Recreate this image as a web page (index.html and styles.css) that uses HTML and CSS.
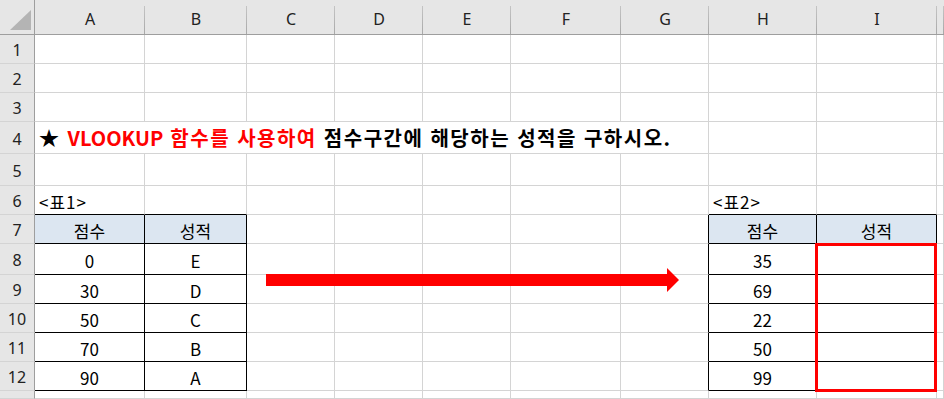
FILE: index.html
```html
<!DOCTYPE html>
<html lang="ko">
<head>
  <meta charset="UTF-8" />
  <title>VLOOKUP 성적 구하기</title>
  <link rel="stylesheet" href="styles.css">
</head>
<body>
  <div class="sheet">
    <!-- column headers -->
    <div class="corner"><span class="tri"></span></div>
    <div class="ch">A</div><div class="ch">B</div><div class="ch">C</div><div class="ch">D</div><div class="ch">E</div>
    <div class="ch">F</div><div class="ch">G</div><div class="ch">H</div><div class="ch">I</div><div class="ch"></div>

    <!-- rows 1-3 -->
    <div class="rh">1</div><div class="c"></div><div class="c"></div><div class="c"></div><div class="c"></div><div class="c"></div><div class="c"></div><div class="c"></div><div class="c"></div><div class="c"></div><div class="c"></div>
    <div class="rh">2</div><div class="c"></div><div class="c"></div><div class="c"></div><div class="c"></div><div class="c"></div><div class="c"></div><div class="c"></div><div class="c"></div><div class="c"></div><div class="c"></div>
    <div class="rh">3</div><div class="c"></div><div class="c"></div><div class="c"></div><div class="c"></div><div class="c"></div><div class="c"></div><div class="c"></div><div class="c"></div><div class="c"></div><div class="c"></div>

    <!-- row 4: title overflows A..G -->
    <div class="rh">4</div>
    <div class="c title span7">★ <span class="red"><span class="latin">VLOOKUP</span> 함수를 사용하여</span> 점수구간에 해당하는 성적을 구하시오.</div>
    <div class="c"></div><div class="c"></div><div class="c"></div>

    <div class="rh">5</div><div class="c"></div><div class="c"></div><div class="c"></div><div class="c"></div><div class="c"></div><div class="c"></div><div class="c"></div><div class="c"></div><div class="c"></div><div class="c"></div>

    <!-- row 6: table captions -->
    <div class="rh">6</div>
    <div class="c cap bb">&lt;표1&gt;</div><div class="c bb"></div>
    <div class="c"></div><div class="c"></div><div class="c"></div><div class="c"></div><div class="c"></div>
    <div class="c cap bb">&lt;표2&gt;</div><div class="c bb"></div><div class="c"></div>

    <!-- row 7: table heads -->
    <div class="rh">7</div>
    <div class="c t head">점수</div><div class="c t head">성적</div>
    <div class="c"></div><div class="c"></div><div class="c"></div><div class="c"></div><div class="c br"></div>
    <div class="c t head">점수</div><div class="c t head">성적</div><div class="c"></div>

    <div class="rh">8</div>
    <div class="c t">0</div><div class="c t">E</div>
    <div class="c"></div><div class="c"></div><div class="c"></div><div class="c"></div><div class="c br"></div>
    <div class="c t">35</div><div class="c t"></div><div class="c"></div>

    <div class="rh">9</div>
    <div class="c t">30</div><div class="c t">D</div>
    <div class="c"></div><div class="c"></div><div class="c"></div><div class="c"></div><div class="c br"></div>
    <div class="c t">69</div><div class="c t"></div><div class="c"></div>

    <div class="rh">10</div>
    <div class="c t">50</div><div class="c t">C</div>
    <div class="c"></div><div class="c"></div><div class="c"></div><div class="c"></div><div class="c br"></div>
    <div class="c t">22</div><div class="c t"></div><div class="c"></div>

    <div class="rh">11</div>
    <div class="c t">70</div><div class="c t">B</div>
    <div class="c"></div><div class="c"></div><div class="c"></div><div class="c"></div><div class="c br"></div>
    <div class="c t">50</div><div class="c t"></div><div class="c"></div>

    <div class="rh">12</div>
    <div class="c t">90</div><div class="c t">A</div>
    <div class="c"></div><div class="c"></div><div class="c"></div><div class="c"></div><div class="c br"></div>
    <div class="c t">99</div><div class="c t"></div><div class="c"></div>

    <!-- row 13, only its top edge is in view -->
    <div class="rh"></div><div class="c"></div><div class="c"></div><div class="c"></div><div class="c"></div><div class="c"></div><div class="c"></div><div class="c"></div><div class="c"></div><div class="c"></div><div class="c"></div>

    <!-- drawing objects on top of the cells -->
    <svg class="arrow" width="414" height="24" viewBox="0 0 414 24">
      <rect x="0" y="6" width="401" height="12" fill="#ff0000" />
      <polygon points="401,0 413,12 401,24" fill="#ff0000" />
    </svg>
    <div class="pick"></div>
  </div>
</body>
</html>
```

FILE: styles.css
```css
* { box-sizing: border-box; margin: 0; padding: 0; }
body {
  background: #fff;
  font-family: "Noto Sans CJK KR", "Noto Sans", sans-serif;
  overflow: hidden;
}
.sheet {
  position: relative;
  display: grid;
  grid-template-columns: 35px 110px 102px 88px 88px 88px 110px 88px 108px 120px 1fr;
  grid-template-rows: 35px 29px 29px 29px 32px 32px 29px 29px 31px 29px 29px 29px 29px 1fr;
  width: 944px;
  height: 399px;
  overflow: hidden;
}

/* headers */
.corner, .ch, .rh {
  background: #e6e6e6;
  color: #222;
  font-family: "Noto Sans", sans-serif;
  font-size: 16px;
}
.corner {
  position: relative;
  border-right: 1px solid #9e9e9e;
  border-bottom: 1px solid #9e9e9e;
}
.tri {
  position: absolute;
  left: 10px; top: 10px;
  width: 21px; height: 20px;
  background: #b4b4b4;
  clip-path: polygon(100% 0, 100% 100%, 0 100%);
}
.ch {
  display: flex; justify-content: center; align-items: center;
  padding-top: 3px;
  border-bottom: 1px solid #9e9e9e;
  background: linear-gradient(#c4c4c4, #a8a8a8) right 6px / 1px calc(100% - 6px) no-repeat, #e6e6e6;
}
.rh {
  display: flex; justify-content: center; align-items: center;
  padding-top: 2px;
  border-right: 1px solid #9e9e9e;
  border-bottom: 1px solid #d4d4d4;
}

/* cells */
.c {
  display: flex; justify-content: center; align-items: center;
  padding-top: 2px;
  border-right: 1px solid #d4d4d4;
  border-bottom: 1px solid #d4d4d4;
  font-size: 17px;
  color: #000;
  white-space: nowrap;
}
.span7 { grid-column: span 7; }
.title {
  display: block;
  padding: 0 0 0 4px;
  line-height: 31px;
  font-size: 20px;
  font-weight: 700;
  letter-spacing: 1.5px;
}
.title .latin { letter-spacing: 0; }
.red { color: #ff0000; }
.cap {
  justify-content: flex-start;
  padding-left: 4px;
  letter-spacing: 1px;
}
.t { border-right-color: #000; border-bottom-color: #000; }
.head { background: #dce6f1; }
.bb { border-bottom-color: #000; }
.br { border-right-color: #000; }

/* overlays */
.arrow {
  position: absolute;
  left: 266px; top: 268px;
}
.pick {
  position: absolute;
  left: 815px; top: 243px;
  width: 122px; height: 149px;
  border: 3px solid #ff0000;
}
```
